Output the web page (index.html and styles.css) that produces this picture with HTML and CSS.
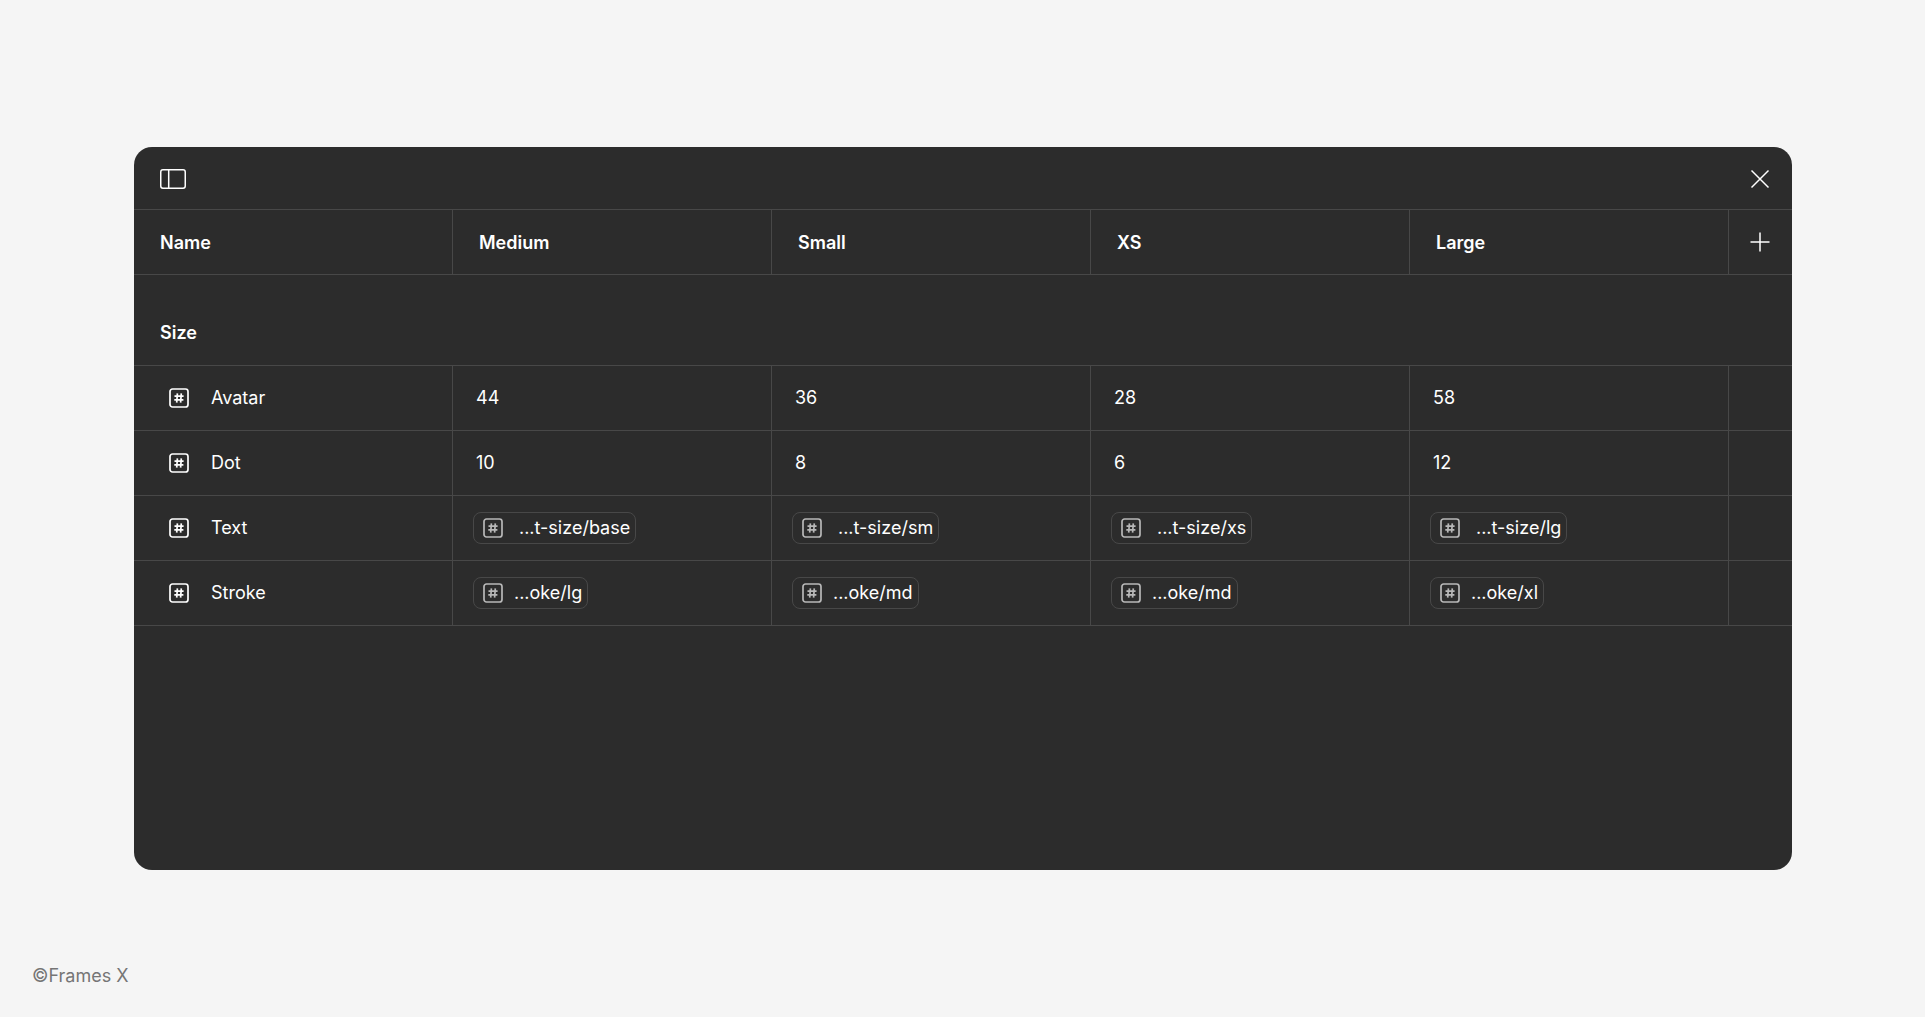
FILE: index.html
```html
<!DOCTYPE html>
<html lang="en">
<head>
<meta charset="utf-8">
<meta name="viewport" content="width=device-width, initial-scale=1">
<title>Variables</title>
<link rel="stylesheet" href="styles.css">
</head>
<body class="page">
<svg class="sprite" aria-hidden="true">
  <symbol id="number" viewBox="0 0 20 20">
    <rect x="1" y="1" width="18" height="18" rx="2.5"/>
    <path d="M8.4 5.4 7.7 14.6M12.3 5.4 11.6 14.6M5.5 8.2H14.6M5.3 11.9H14.4"/>
  </symbol>
</svg>
<main class="panel">
  <header class="toolbar">
    <button class="icon-button" type="button" aria-label="Toggle sidebar">
      <svg class="icon-sidebar" viewBox="0 0 26 20"><rect x="0.75" y="0.75" width="24.5" height="18.5" rx="2.2"/><path d="M8.7 1V19"/></svg>
    </button>
    <button class="icon-button" type="button" aria-label="Close">
      <svg class="icon-small" viewBox="0 0 20 20"><path d="M1.5 1.5 18.5 18.5M18.5 1.5 1.5 18.5"/></svg>
    </button>
  </header>
  <table class="variables">
    <colgroup><col><col><col><col><col><col class="col-add"></colgroup>
    <thead>
      <tr>
        <th scope="col">Name</th>
        <th scope="col">Medium</th>
        <th scope="col">Small</th>
        <th scope="col">XS</th>
        <th scope="col">Large</th>
        <td class="add-cell"><button class="icon-button" type="button" aria-label="Add mode"><svg class="icon-small" viewBox="0 0 20 20"><path d="M10 .5V19.5M.5 10H19.5"/></svg></button></td>
      </tr>
    </thead>
    <tbody>
      <tr class="group"><th scope="rowgroup" colspan="6">Size</th></tr>
      <tr>
        <th class="name" scope="row"><span class="label"><svg class="icon-number"><use href="#number"/></svg>Avatar</span></th>
        <td class="value">44</td><td class="value">36</td><td class="value">28</td><td class="value">58</td><td></td>
      </tr>
      <tr>
        <th class="name" scope="row"><span class="label"><svg class="icon-number"><use href="#number"/></svg>Dot</span></th>
        <td class="value">10</td><td class="value">8</td><td class="value">6</td><td class="value">12</td><td></td>
      </tr>
      <tr>
        <th class="name" scope="row"><span class="label"><svg class="icon-number"><use href="#number"/></svg>Text</span></th>
        <td><button class="chip chip-wide" type="button"><svg class="icon-number"><use href="#number"/></svg>...t-size/base</button></td>
        <td><button class="chip chip-wide" type="button"><svg class="icon-number"><use href="#number"/></svg>...t-size/sm</button></td>
        <td><button class="chip chip-wide" type="button"><svg class="icon-number"><use href="#number"/></svg>...t-size/xs</button></td>
        <td><button class="chip chip-wide" type="button"><svg class="icon-number"><use href="#number"/></svg>...t-size/lg</button></td>
        <td></td>
      </tr>
      <tr>
        <th class="name" scope="row"><span class="label"><svg class="icon-number"><use href="#number"/></svg>Stroke</span></th>
        <td><button class="chip" type="button"><svg class="icon-number"><use href="#number"/></svg>...oke/lg</button></td>
        <td><button class="chip" type="button"><svg class="icon-number"><use href="#number"/></svg>...oke/md</button></td>
        <td><button class="chip" type="button"><svg class="icon-number"><use href="#number"/></svg>...oke/md</button></td>
        <td><button class="chip" type="button"><svg class="icon-number"><use href="#number"/></svg>...oke/xl</button></td>
        <td></td>
      </tr>
    </tbody>
  </table>
</main>
<footer class="credit">©Frames X</footer>
</body>
</html>
```

FILE: styles.css
```css
* {
  box-sizing: border-box;
}

.page {
  display: flex;
  flex-direction: column;
  min-height: 100vh;
  margin: 0;
  background: #f5f5f5;
  color: #fff;
  font: 400 18px/24px Inter, sans-serif;
}

.sprite {
  position: absolute;
  width: 0;
  height: 0;
}

svg {
  display: block;
  fill: none;
  stroke: currentColor;
  stroke-width: 1.5;
}

button {
  font: inherit;
  color: inherit;
  cursor: pointer;
}

.panel {
  flex: 1;
  margin: 147px 133px 0 134px;
  overflow: hidden;
  border-radius: 18px;
  background: #2c2c2c;
}

.toolbar {
  display: flex;
  align-items: center;
  justify-content: space-between;
  height: 63px;
  padding: 2px 22px 0 26px;
  border-bottom: 1px solid #484848;
}

.icon-button {
  display: block;
  padding: 0;
  border: 0;
  background: none;
}

.icon-sidebar {
  width: 26px;
  height: 20px;
}

.icon-small {
  width: 20px;
  height: 20px;
}

.icon-number {
  flex: none;
  width: 20px;
  height: 20px;
  stroke-width: 1.7;
}

.variables {
  width: 100%;
  table-layout: fixed;
  border-spacing: 0;
}

.col-add {
  width: 63px;
}

.variables th,
.variables td {
  height: 65px;
  padding: 0 20px;
  border-right: 1px solid #484848;
  border-bottom: 1px solid #484848;
  text-align: left;
  vertical-align: middle;
}

.variables th {
  padding: 2px 26px 0;
  font-weight: 600;
}

.variables th:last-child,
.variables td:last-child {
  border-right: 0;
}

.variables .add-cell {
  padding: 0 21px;
}

.variables .group th {
  height: 91px;
  padding-top: 26px;
}

.variables .name {
  padding: 0 35px;
  font-weight: 400;
}

.variables .value {
  padding: 0 23px;
}

.label {
  display: flex;
  align-items: center;
  gap: 22px;
}

.chip {
  display: flex;
  align-items: center;
  gap: 11px;
  height: 32px;
  padding: 0 5px 0 9px;
  border: 1px solid #484848;
  border-radius: 8px;
  background: none;
}

.chip-wide {
  gap: 16px;
}

.chip .icon-number {
  color: #b8b8b8;
}

.credit {
  height: 147px;
  padding: 94px 32px 0;
  color: #757575;
}
```
